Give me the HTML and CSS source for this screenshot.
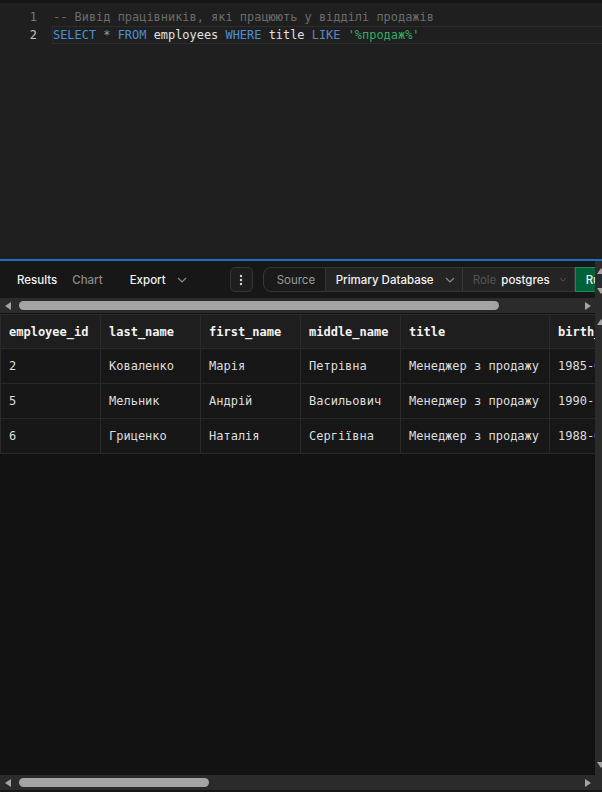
FILE: index.html
```html
<!DOCTYPE html>
<html lang="uk">
<head>
<meta charset="utf-8">
<title>SQL Editor</title>
<link rel="stylesheet" href="styles.css">
</head>
<body>
<div class="app">
  <div class="editor">
    <div class="line">
      <span class="ln">1</span>
      <span class="code"><span class="t-com">-- Вивід працівників, які працюють у відділі продажів</span></span>
    </div>
    <div class="line active">
      <span class="ln">2</span>
      <span class="code"><span class="t-kw">SELECT</span> <span class="t-op">*</span> <span class="t-kw">FROM</span> <span class="t-id">employees</span> <span class="t-kw">WHERE</span> <span class="t-id">title</span> <span class="t-kw2">LIKE</span> <span class="t-str">'%продаж%'</span></span>
    </div>
  </div>
  <div class="splitter"></div>
  <div class="results">
    <div class="panel panel-top">
      <div class="panel-main">
        <div class="toolbar">
          <span class="tab active">Results</span>
          <span class="tab muted">Chart</span>
          <span class="tab export">Export
            <svg class="chev" width="10" height="6" viewBox="0 0 10 6"><path d="M1 1l4 4 4-4" fill="none" stroke="currentColor" stroke-width="1.2"/></svg>
          </span>
          <span class="kebab">
            <svg width="4" height="12" viewBox="0 0 4 12"><circle cx="2" cy="2" r="1.2"/><circle cx="2" cy="6" r="1.2"/><circle cx="2" cy="10" r="1.2"/></svg>
          </span>
          <div class="segments">
            <span class="seg seg-source">Source</span>
            <span class="seg seg-db">Primary Database
              <svg class="chev" width="10" height="6" viewBox="0 0 10 6"><path d="M1 1l4 4 4-4" fill="none" stroke="currentColor" stroke-width="1.2"/></svg>
            </span>
            <span class="seg seg-role"><span class="role-label">Role</span> postgres
              <svg class="chev dim" width="8" height="5" viewBox="0 0 10 6"><path d="M1 1l4 4 4-4" fill="none" stroke="currentColor" stroke-width="1.2"/></svg>
            </span>
            <span class="run">Run</span>
          </div>
        </div>
        <div class="hscroll">
          <span class="arrow-left"></span>
          <div class="track"><div class="thumb thumb-top"></div></div>
          <span class="arrow-right"></span>
        </div>
      </div>
      <div class="vscroll vscroll-top">
        <span class="arrow-up"></span>
        <span class="arrow-down"></span>
      </div>
    </div>

    <div class="panel panel-grid">
      <div class="panel-main">
        <div class="grid">
          <table>
            <colgroup>
              <col class="c100"><col class="c100"><col class="c100"><col class="c100"><col class="c149"><col class="c120">
            </colgroup>
            <thead>
              <tr><th>employee_id</th><th>last_name</th><th>first_name</th><th>middle_name</th><th>title</th><th>birth_date</th></tr>
            </thead>
            <tbody>
              <tr><td>2</td><td>Коваленко</td><td>Марія</td><td>Петрівна</td><td>Менеджер з продажу</td><td>1985-03-15</td></tr>
              <tr><td>5</td><td>Мельник</td><td>Андрій</td><td>Васильович</td><td>Менеджер з продажу</td><td>1990-11-02</td></tr>
              <tr><td>6</td><td>Гриценко</td><td>Наталія</td><td>Сергіївна</td><td>Менеджер з продажу</td><td>1988-07-21</td></tr>
            </tbody>
          </table>
        </div>
        <div class="hscroll hscroll-bottom">
          <span class="arrow-left"></span>
          <div class="track"><div class="thumb thumb-bottom"></div></div>
          <span class="arrow-right"></span>
        </div>
      </div>
      <div class="vscroll vscroll-grid">
        <span class="arrow-up"></span>
        <span class="arrow-down"></span>
      </div>
    </div>
  </div>
</div>
</body>
</html>
```
FILE: styles.css
```css
* { box-sizing: border-box; }
html, body { margin: 0; padding: 0; }
body {
  width: 602px;
  height: 792px;
  overflow: hidden;
  background: #121212;
  font-family: Inter, "Noto Sans", sans-serif;
}
.app { display: flex; flex-direction: column; height: 792px; }

/* editor */
.editor {
  height: 259px;
  background: #1f1f1f;
  border-top: 3px solid #151515;
  padding-top: 5px;
  font-family: "DejaVu Sans Mono", monospace;
  font-size: 11.95px;
}
.line {
  display: flex;
  height: 18px;
  align-items: center;
  white-space: pre;
}
.ln {
  width: 37px;
  text-align: right;
  color: #7a7a7a;
  flex: none;
}
.code {
  margin-left: 15px;
  padding-left: 0;
  flex: 1;
  height: 18px;
  line-height: 16px;
  border: 1px solid transparent;
  border-right: none;
}
.line.active .ln { color: #c6c6c6; }
.line.active .code { border-color: #2c2c2c; }
.t-com { color: #6c6c6c; }
.t-kw { color: #4a90d9; }
.t-kw2 { color: #5f86b8; }
.t-op { color: #9a9a9a; }
.t-id { color: #e2e2e2; }
.t-str { color: #2fae68; }

.splitter { height: 2px; background: #1f6fbf; }

/* results */
.results { flex: 1; display: flex; flex-direction: column; background: #171717; padding-bottom: 2px; }
.panel { display: flex; }
.panel-main { width: 595px; overflow: hidden; display: flex; flex-direction: column; }
.panel-top { height: 52px; }
.panel-grid { flex: 1; }

.toolbar {
  height: 37px;
  display: flex;
  align-items: center;
  white-space: nowrap;
  padding-left: 17px;
  font-size: 11.5px;
  color: #f2f2f2;
  background: #171717;
}
.tab { font-weight: 500; }
.tab.muted { color: #8a8a8a; margin-left: 15px; }
.tab.export { margin-left: 27px; display: flex; align-items: center; }
.chev { color: #8a8a8a; margin-left: 11px; }
.chev.dim { color: #555; margin-left: 9px; }
.kebab {
  margin-left: 43px;
  width: 23px;
  height: 25px;
  border: 1px solid #363636;
  border-radius: 5px;
  background: #1e1e1e;
  display: flex;
  align-items: center;
  justify-content: center;
  fill: #d6d6d6;
  flex: none;
}
.segments {
  margin-left: 10px;
  display: flex;
  height: 25px;
  flex: none;
}
.seg {
  display: flex;
  align-items: center;
  height: 25px;
  border: 1px solid #363636;
  border-left: none;
  font-weight: 500;
}
.seg-source {
  width: 63px;
  border-left: 1px solid #363636;
  border-radius: 8px 0 0 8px;
  padding-left: 13px;
  color: #9a9a9a;
  background: #1a1a1a;
  font-weight: 400;
}
.seg-db { width: 137px; padding-left: 10px; background: #242424; }
.seg-role { width: 112px; padding-left: 10px; background: #242424; }
.role-label { color: #555; margin-right: 5px; font-weight: 400; }
.run {
  display: flex;
  align-items: center;
  height: 25px;
  padding: 0 10px;
  background: #006239;
  border: 1px solid #21875a;
  color: #e8f5ee;
  font-weight: 500;
}

.hscroll {
  height: 15px;
  background: #2b2b2b;
  display: flex;
  align-items: center;
  padding: 0 4px 0 5px;
}
.track { flex: 1; height: 9px; margin: 0 3px 0 3px; }
.thumb { height: 9px; border-radius: 5px; background: #a4a4a4; }
.thumb-top { width: 480px; margin-left: 5px; }
.thumb-bottom { width: 190px; margin-left: 5px; }
.arrow-left {
  width: 0; height: 0;
  border-top: 4px solid transparent;
  border-bottom: 4px solid transparent;
  border-right: 6px solid #a4a4a4;
}
.arrow-right {
  width: 0; height: 0;
  border-top: 4px solid transparent;
  border-bottom: 4px solid transparent;
  border-left: 6px solid #a4a4a4;
}

.vscroll {
  width: 7px;
  background: #2b2b2b;
  display: flex;
  flex-direction: column;
  justify-content: space-between;
  overflow: hidden;
  padding-left: 2px;
}
.vscroll-top { padding-top: 7px; padding-bottom: 19px; }
.vscroll-grid { padding-top: 6px; padding-bottom: 22px; }
.arrow-up {
  width: 0; height: 0;
  border-left: 4px solid transparent;
  border-right: 4px solid transparent;
  border-bottom: 6px solid #a4a4a4;
}
.arrow-down {
  width: 0; height: 0;
  border-left: 4px solid transparent;
  border-right: 4px solid transparent;
  border-top: 6px solid #a4a4a4;
}

/* grid */
.grid { flex: 1; background: #121212; overflow: hidden; padding-top: 1px; }
table {
  border-collapse: collapse;
  table-layout: fixed;
  width: 669px;
  font-family: "DejaVu Sans Mono", monospace;
  font-size: 12px;
}
.c100 { width: 100px; }
.c149 { width: 149px; }
.c120 { width: 120px; }
th, td {
  border: 1px solid #2a2a2a;
  height: 35px;
  padding: 0 0 0 8px;
  text-align: left;
  white-space: nowrap;
  overflow: hidden;
}
th { background: #1e1e1e; color: #f4f4f4; font-weight: bold; height: 34px; }
td { background: #171717; color: #dedede; }
```
